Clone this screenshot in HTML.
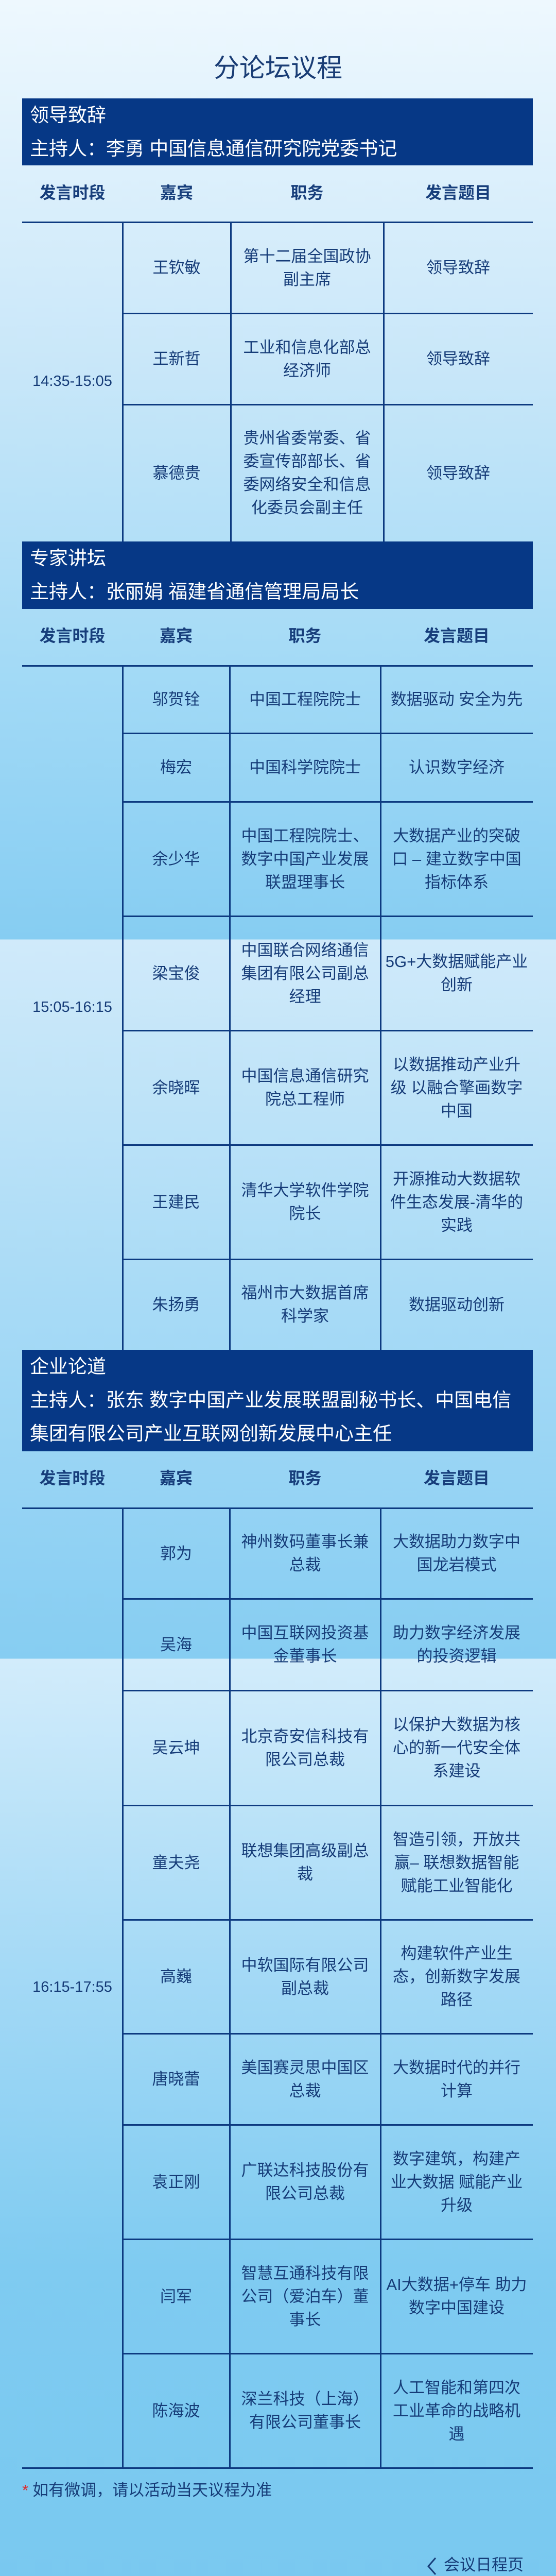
<!DOCTYPE html>
<html><head><meta charset="utf-8">
<style>
*{margin:0;padding:0;box-sizing:border-box}
html,body{width:1080px;height:5127px;overflow:hidden}
body{position:relative;font-family:"Liberation Sans","Noto Sans CJK SC",sans-serif;color:#163c78;
background:linear-gradient(180deg,#eef8fe 0px,#c9e7f9 700px,#a3daf6 1300px,#86cdf2 1823px,#d0eafa 1824px,#a9dbf6 2500px,#86cdf2 3219px,#d2ecfb 3220px,#a6daf6 3800px,#7fcbf1 4400px,#78c8f0 5127px);}
.a{position:absolute}
.title{left:0;width:1080px;top:100px;text-align:center;font-size:50px;line-height:64px;color:#1a3d75}
.hd{left:43px;width:992px;background:#063886;color:#fff;font-size:37px;padding-left:15px}
.hd div{height:65px;line-height:65px;white-space:nowrap}
.ch{font-weight:bold;font-size:32px;text-align:center;line-height:44px;color:#173e7b}
.h{height:3px;background:#0d3a80}
.v{width:3px;background:#0d3a80}
.c{display:flex;align-items:center;justify-content:center;text-align:center;font-size:31px;line-height:45px;white-space:nowrap}
.t{font-size:29px;text-align:center;width:195px;left:43px;line-height:40px;font-family:"Liberation Sans",sans-serif}
.note{left:43px;top:4812px;font-size:31px;line-height:44px}
.note b{color:#e0282a;font-weight:normal;margin-right:8px}
</style></head><body>
<div class="a title">分论坛议程</div>

<!-- Section 1 -->
<div class="a hd" style="top:191px;height:130px"><div>领导致辞</div><div>主持人：李勇 中国信息通信研究院党委书记</div></div>
<div class="a ch" style="left:43px;width:195px;top:352px">发言时段</div>
<div class="a ch" style="left:238px;width:210px;top:352px">嘉宾</div>
<div class="a ch" style="left:448px;width:297px;top:352px">职务</div>
<div class="a ch" style="left:745px;width:290px;top:352px">发言题目</div>
<div class="a h" style="left:43px;width:992px;top:430px"></div>
<div class="a h" style="left:238px;width:797px;top:607px"></div>
<div class="a h" style="left:238px;width:797px;top:784px"></div>
<div class="a v" style="left:237px;top:431px;height:620px"></div>
<div class="a v" style="left:447px;top:431px;height:620px"></div>
<div class="a v" style="left:744px;top:431px;height:620px"></div>
<div class="a t" style="top:720px">14:35-15:05</div>
<div class="a c" style="left:238px;width:210px;top:431px;height:177px">王钦敏</div>
<div class="a c" style="left:448px;width:297px;top:431px;height:177px">第十二届全国政协<br>副主席</div>
<div class="a c" style="left:745px;width:290px;top:431px;height:177px">领导致辞</div>
<div class="a c" style="left:238px;width:210px;top:608px;height:177px">王新哲</div>
<div class="a c" style="left:448px;width:297px;top:608px;height:177px">工业和信息化部总<br>经济师</div>
<div class="a c" style="left:745px;width:290px;top:608px;height:177px">领导致辞</div>
<div class="a c" style="left:238px;width:210px;top:785px;height:266px">慕德贵</div>
<div class="a c" style="left:448px;width:297px;top:785px;height:266px">贵州省委常委、省<br>委宣传部部长、省<br>委网络安全和信息<br>化委员会副主任</div>
<div class="a c" style="left:745px;width:290px;top:785px;height:266px">领导致辞</div>

<!-- Section 2 -->
<div class="a hd" style="top:1051px;height:131px"><div>专家讲坛</div><div>主持人：张丽娟 福建省通信管理局局长</div></div>
<div class="a ch" style="left:43px;width:195px;top:1212px">发言时段</div>
<div class="a ch" style="left:238px;width:208px;top:1212px">嘉宾</div>
<div class="a ch" style="left:446px;width:293px;top:1212px">职务</div>
<div class="a ch" style="left:739px;width:296px;top:1212px">发言题目</div>
<div class="a h" style="left:43px;width:992px;top:1291px"></div>
<div class="a h" style="left:238px;width:797px;top:1422px"></div>
<div class="a h" style="left:238px;width:797px;top:1555px"></div>
<div class="a h" style="left:238px;width:797px;top:1777px"></div>
<div class="a h" style="left:238px;width:797px;top:1999px"></div>
<div class="a h" style="left:238px;width:797px;top:2221px"></div>
<div class="a h" style="left:238px;width:797px;top:2443px"></div>
<div class="a v" style="left:237px;top:1292px;height:1328px"></div>
<div class="a v" style="left:445px;top:1292px;height:1328px"></div>
<div class="a v" style="left:738px;top:1292px;height:1328px"></div>
<div class="a t" style="top:1935px">15:05-16:15</div>
<div class="a c" style="left:238px;width:208px;top:1292px;height:131px">邬贺铨</div>
<div class="a c" style="left:446px;width:293px;top:1292px;height:131px">中国工程院院士</div>
<div class="a c" style="left:739px;width:296px;top:1292px;height:131px">数据驱动 安全为先</div>
<div class="a c" style="left:238px;width:208px;top:1423px;height:133px">梅宏</div>
<div class="a c" style="left:446px;width:293px;top:1423px;height:133px">中国科学院院士</div>
<div class="a c" style="left:739px;width:296px;top:1423px;height:133px">认识数字经济</div>
<div class="a c" style="left:238px;width:208px;top:1556px;height:222px">余少华</div>
<div class="a c" style="left:446px;width:293px;top:1556px;height:222px">中国工程院院士、<br>数字中国产业发展<br>联盟理事长</div>
<div class="a c" style="left:739px;width:296px;top:1556px;height:222px">大数据产业的突破<br>口 – 建立数字中国<br>指标体系</div>
<div class="a c" style="left:238px;width:208px;top:1778px;height:222px">梁宝俊</div>
<div class="a c" style="left:446px;width:293px;top:1778px;height:222px">中国联合网络通信<br>集团有限公司副总<br>经理</div>
<div class="a c" style="left:739px;width:296px;top:1778px;height:222px">5G+大数据赋能产业<br>创新</div>
<div class="a c" style="left:238px;width:208px;top:2000px;height:222px">余晓晖</div>
<div class="a c" style="left:446px;width:293px;top:2000px;height:222px">中国信息通信研究<br>院总工程师</div>
<div class="a c" style="left:739px;width:296px;top:2000px;height:222px">以数据推动产业升<br>级 以融合擎画数字<br>中国</div>
<div class="a c" style="left:238px;width:208px;top:2222px;height:222px">王建民</div>
<div class="a c" style="left:446px;width:293px;top:2222px;height:222px">清华大学软件学院<br>院长</div>
<div class="a c" style="left:739px;width:296px;top:2222px;height:222px">开源推动大数据软<br>件生态发展-清华的<br>实践</div>
<div class="a c" style="left:238px;width:208px;top:2444px;height:176px">朱扬勇</div>
<div class="a c" style="left:446px;width:293px;top:2444px;height:176px">福州市大数据首席<br>科学家</div>
<div class="a c" style="left:739px;width:296px;top:2444px;height:176px">数据驱动创新</div>

<!-- Section 3 -->
<div class="a hd" style="top:2620px;height:197px"><div>企业论道</div><div>主持人：张东 数字中国产业发展联盟副秘书长、中国电信</div><div>集团有限公司产业互联网创新发展中心主任</div></div>
<div class="a ch" style="left:43px;width:195px;top:2847px">发言时段</div>
<div class="a ch" style="left:238px;width:208px;top:2847px">嘉宾</div>
<div class="a ch" style="left:446px;width:293px;top:2847px">职务</div>
<div class="a ch" style="left:739px;width:296px;top:2847px">发言题目</div>
<div class="a h" style="left:43px;width:992px;top:2926px"></div>
<div class="a h" style="left:238px;width:797px;top:3102px"></div>
<div class="a h" style="left:238px;width:797px;top:3280px"></div>
<div class="a h" style="left:238px;width:797px;top:3503px"></div>
<div class="a h" style="left:238px;width:797px;top:3725px"></div>
<div class="a h" style="left:238px;width:797px;top:3946px"></div>
<div class="a h" style="left:238px;width:797px;top:4123px"></div>
<div class="a h" style="left:238px;width:797px;top:4345px"></div>
<div class="a h" style="left:238px;width:797px;top:4567px"></div>
<div class="a h" style="left:43px;width:992px;top:4789px"></div>
<div class="a v" style="left:237px;top:2927px;height:1863px"></div>
<div class="a v" style="left:445px;top:2927px;height:1863px"></div>
<div class="a v" style="left:738px;top:2927px;height:1863px"></div>
<div class="a t" style="top:3837px">16:15-17:55</div>
<div class="a c" style="left:238px;width:208px;top:2927px;height:176px">郭为</div>
<div class="a c" style="left:446px;width:293px;top:2927px;height:176px">神州数码董事长兼<br>总裁</div>
<div class="a c" style="left:739px;width:296px;top:2927px;height:176px">大数据助力数字中<br>国龙岩模式</div>
<div class="a c" style="left:238px;width:208px;top:3103px;height:178px">吴海</div>
<div class="a c" style="left:446px;width:293px;top:3103px;height:178px">中国互联网投资基<br>金董事长</div>
<div class="a c" style="left:739px;width:296px;top:3103px;height:178px">助力数字经济发展<br>的投资逻辑</div>
<div class="a c" style="left:238px;width:208px;top:3281px;height:223px">吴云坤</div>
<div class="a c" style="left:446px;width:293px;top:3281px;height:223px">北京奇安信科技有<br>限公司总裁</div>
<div class="a c" style="left:739px;width:296px;top:3281px;height:223px">以保护大数据为核<br>心的新一代安全体<br>系建设</div>
<div class="a c" style="left:238px;width:208px;top:3504px;height:222px">童夫尧</div>
<div class="a c" style="left:446px;width:293px;top:3504px;height:222px">联想集团高级副总<br>裁</div>
<div class="a c" style="left:739px;width:296px;top:3504px;height:222px">智造引领，开放共<br>赢– 联想数据智能<br>赋能工业智能化</div>
<div class="a c" style="left:238px;width:208px;top:3726px;height:221px">高巍</div>
<div class="a c" style="left:446px;width:293px;top:3726px;height:221px">中软国际有限公司<br>副总裁</div>
<div class="a c" style="left:739px;width:296px;top:3726px;height:221px">构建软件产业生<br>态，创新数字发展<br>路径</div>
<div class="a c" style="left:238px;width:208px;top:3947px;height:177px">唐晓蕾</div>
<div class="a c" style="left:446px;width:293px;top:3947px;height:177px">美国赛灵思中国区<br>总裁</div>
<div class="a c" style="left:739px;width:296px;top:3947px;height:177px">大数据时代的并行<br>计算</div>
<div class="a c" style="left:238px;width:208px;top:4124px;height:222px">袁正刚</div>
<div class="a c" style="left:446px;width:293px;top:4124px;height:222px">广联达科技股份有<br>限公司总裁</div>
<div class="a c" style="left:739px;width:296px;top:4124px;height:222px">数字建筑，构建产<br>业大数据 赋能产业<br>升级</div>
<div class="a c" style="left:238px;width:208px;top:4346px;height:222px">闫军</div>
<div class="a c" style="left:446px;width:293px;top:4346px;height:222px">智慧互通科技有限<br>公司（爱泊车）董<br>事长</div>
<div class="a c" style="left:739px;width:296px;top:4346px;height:222px">AI大数据+停车 助力<br>数字中国建设</div>
<div class="a c" style="left:238px;width:208px;top:4568px;height:222px">陈海波</div>
<div class="a c" style="left:446px;width:293px;top:4568px;height:222px">深兰科技（上海）<br>有限公司董事长</div>
<div class="a c" style="left:739px;width:296px;top:4568px;height:222px">人工智能和第四次<br>工业革命的战略机<br>遇</div>

<div class="a note"><b>*</b>如有微调，请以活动当天议程为准</div>

<div class="a" style="left:826px;top:4955px;height:48px;font-size:31px;line-height:48px;color:#163c78;white-space:nowrap">
<svg width="24" height="40" viewBox="0 0 24 40" style="vertical-align:middle;margin-right:12px"><path d="M20 4 L6 20 L20 36" fill="none" stroke="#163c78" stroke-width="3"/></svg>会议日程页</div>

<div class="a" style="left:833px;top:5050px;height:40px;font-size:30px;line-height:40px;color:#ffffff;white-space:nowrap">
<svg width="48" height="40" viewBox="0 0 48 40" style="vertical-align:middle"><ellipse cx="17" cy="16" rx="14" ry="12" fill="#fff"/><ellipse cx="31" cy="25" rx="13" ry="11" fill="#fff" stroke="#8acbee" stroke-width="2"/></svg>网信军民融合</div>
</body></html>
